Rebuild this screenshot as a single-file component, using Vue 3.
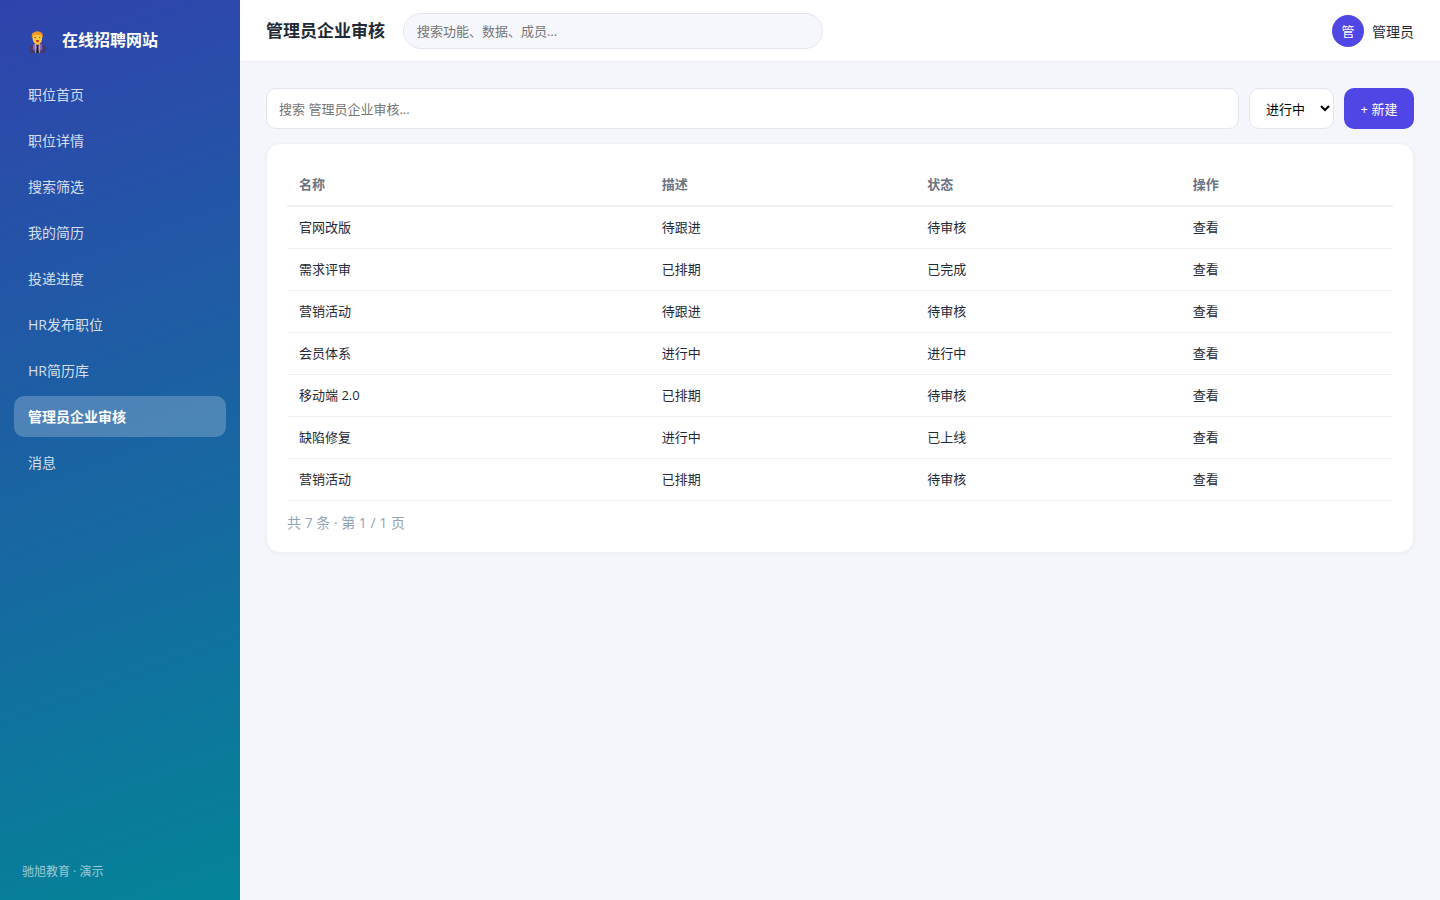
<script setup>
import { ref } from 'vue'

const navItems = ['职位首页', '职位详情', '搜索筛选', '我的简历', '投递进度', 'HR发布职位', 'HR简历库', '管理员企业审核', '消息']
const active = ref('管理员企业审核')
const globalQuery = ref('')
const query = ref('')
const status = ref('进行中')
const statuses = ['进行中', '已完成', '待审核']
const rows = [
  ['官网改版', '待跟进', '待审核'],
  ['需求评审', '已排期', '已完成'],
  ['营销活动', '待跟进', '待审核'],
  ['会员体系', '进行中', '进行中'],
  ['移动端 2.0', '已排期', '待审核'],
  ['缺陷修复', '进行中', '已上线'],
  ['营销活动', '已排期', '待审核'],
]
</script>

<template>
  <div class="layout">
    <aside class="sidebar">
      <div class="brand">
        <svg class="logo" viewBox="0 0 17 22" aria-hidden="true">
          <path d="M0 22v-4.500c0-2.200 1.200-3.400 3.600-3.700L6 12.800h5l2.400 1c2.400.3 3.600 1.500 3.600 3.700V22z" fill="#433b6b" />
          <path d="M4.200 13.200 6.200 12.700 7.200 16v6H6.200L5.300 19.300 3.700 18.300z" fill="#8764b8" />
          <path d="M12.800 13.200 10.800 12.700 9.800 16v6h1l.9-2.700 1.600-1z" fill="#8764b8" />
          <path d="M6.100 12.800h4.800L10.300 22H6.700z" fill="#cfc4dd" />
          <path d="M7 13.600h3l-.5 2.200.4 6.200H7.100l.4-6.200z" fill="#241d33" />
          <path d="M6.400 10h4.200v2.800L8.500 14.200 6.400 12.800z" fill="#e8a51c" />
          <path d="M3.500 4.200C3.500 2 5.500 1.400 8.400 1.400S13 2.500 13 5v3c0 3-2 5-4.600 5S4 11 3.700 8z" fill="#ffc83d" />
          <path d="M3 6.500C2.300 3.500 3 1.400 5.500 1.300 7-.1 10 0 11.500 1.300c2 .4 2.600 2.300 2 5.200l-1-.8-.8-1.700H8.500L5.700 3.200 4.200 4.800 4 6.700z" fill="#f7941d" />
          <path d="M5.600 6.600h1.300M10 6.600h1.300" stroke="#59402b" stroke-width=".9" />
          <path d="M7 9.300c1-.5 2-.5 3 0l-.5 1.900h-2z" fill="#cf2630" />
        </svg>
        <span>在线招聘网站</span>
      </div>
      <nav class="nav" aria-label="主导航">
        <a
          v-for="item in navItems"
          :key="item"
          href="#"
          :class="['nav-item', { active: item === active }]"
          :aria-current="item === active ? 'page' : undefined"
          @click.prevent="active = item"
        >{{ item }}</a>
      </nav>
      <div class="side-foot">驰旭教育 · 演示</div>
    </aside>

    <div class="main">
      <header class="topbar">
        <h1>管理员企业审核</h1>
        <input v-model="globalQuery" class="global-search" type="text" placeholder="搜索功能、数据、成员…" aria-label="全局搜索" />
        <div class="user">
          <span class="avatar">管</span>
          <span>管理员</span>
        </div>
      </header>

      <main class="content">
        <div class="toolbar">
          <input v-model="query" class="field" type="text" placeholder="搜索 管理员企业审核..." aria-label="搜索列表" />
          <select v-model="status" class="filter" aria-label="状态">
            <option v-for="s in statuses" :key="s">{{ s }}</option>
          </select>
          <button class="create" type="button">+ 新建</button>
        </div>

        <section class="card">
          <table>
            <thead>
              <tr>
                <th class="col-name" scope="col">名称</th>
                <th class="col-mid" scope="col">描述</th>
                <th class="col-mid" scope="col">状态</th>
                <th scope="col">操作</th>
              </tr>
            </thead>
            <tbody>
              <tr v-for="(row, i) in rows" :key="i">
                <td v-for="(cell, j) in row" :key="j">{{ cell }}</td>
                <td><a href="#" class="view" @click.prevent>查看</a></td>
              </tr>
            </tbody>
          </table>
          <div class="pager">共 7 条 · 第 1 / 1 页</div>
        </section>
      </main>
    </div>
  </div>
</template>

<style>
body {
  margin: 0;
  background: #f5f6fb;
}
</style>

<style scoped>
.layout,
.layout * {
  box-sizing: border-box;
}
.layout {
  display: flex;
  min-height: 100vh;
  background: #f5f6fb;
  color: #1f2937;
  font-family: "Open Sans", "Noto Sans CJK SC", sans-serif;
  font-size: 14px;
}
.sidebar {
  display: flex;
  flex-direction: column;
  flex: none;
  width: 240px;
  padding: 20px 14px;
  background: linear-gradient(160deg, #3043ad, #048498);
  color: #fff;
}
.brand {
  display: flex;
  align-items: flex-end;
  gap: 16px;
  height: 33px;
  margin-bottom: 21px;
  padding-left: 15px;
  font-size: 16px;
  font-weight: 700;
  line-height: 26px;
}
.logo {
  width: 17px;
  height: 22px;
}
.nav {
  display: flex;
  flex-direction: column;
  gap: 5px;
}
.nav-item {
  padding: 10px 14px;
  border-radius: 10px;
  color: rgba(255, 255, 255, 0.82);
  font-size: 14px;
  line-height: 21px;
  text-decoration: none;
}
.nav-item.active {
  background: rgba(255, 255, 255, 0.22);
  color: #fff;
  font-weight: 700;
}
.side-foot {
  margin-top: auto;
  padding-left: 8px;
  color: rgba(255, 255, 255, 0.6);
  font-size: 12px;
  line-height: 16px;
}
.main {
  flex: 1;
  min-width: 0;
}
.topbar {
  display: flex;
  align-items: center;
  gap: 18px;
  height: 62px;
  padding: 0 26px;
  border-bottom: 1px solid #eceef4;
  background: #fff;
}
h1 {
  margin: 0;
  font-size: 17px;
  font-weight: 700;
  line-height: 24px;
  white-space: nowrap;
}
input,
select,
button {
  font-family: inherit;
  font-size: 13px;
}
input::placeholder {
  color: #757575;
}
.global-search {
  flex: 0 1 420px;
  min-width: 0;
  height: 36px;
  padding: 0 13px;
  border: 1px solid #e3e6ef;
  border-radius: 18px;
  background: #f6f7fc;
}
.user {
  display: flex;
  align-items: center;
  gap: 8px;
  margin-left: auto;
  white-space: nowrap;
}
.avatar {
  display: grid;
  place-items: center;
  width: 32px;
  height: 32px;
  border-radius: 50%;
  background: #4f46e5;
  color: #fff;
  font-size: 13px;
}
.content {
  padding: 26px;
}
.toolbar {
  display: flex;
  gap: 10px;
  height: 41px;
  margin-bottom: 14px;
}
.field {
  flex: 1;
  min-width: 0;
  padding: 0 12px;
  border: 1px solid #e3e6ef;
  border-radius: 10px;
  background: #fff;
}
.filter {
  width: 85px;
  padding: 0 0 0 12px;
  border: 1px solid #e3e6ef;
  border-radius: 10px;
  background: #fff;
  color: #000;
}
.create {
  width: 70px;
  padding: 0;
  border: 0;
  border-radius: 10px;
  background: #4f46e5;
  color: #fff;
}
.card {
  padding: 20px;
  border: 1px solid #eff0f6;
  border-radius: 14px;
  background: #fff;
  box-shadow: 0 1px 4px rgba(30, 40, 90, 0.04);
}
table {
  width: 100%;
  border-collapse: separate;
  border-spacing: 0;
  table-layout: fixed;
  font-size: 13px;
  line-height: 21px;
}
.col-name {
  width: 32.8%;
}
.col-mid {
  width: 24%;
}
th,
td {
  padding: 10px 12px;
  border-bottom: 1px solid #eef0f5;
  text-align: left;
}
th {
  border-bottom-width: 2px;
  color: #6b7280;
  font-weight: 600;
}
.view {
  color: inherit;
  text-decoration: none;
}
.pager {
  margin-top: 12px;
  color: #94a3b8;
  font-size: 14px;
  line-height: 19px;
}
</style>
